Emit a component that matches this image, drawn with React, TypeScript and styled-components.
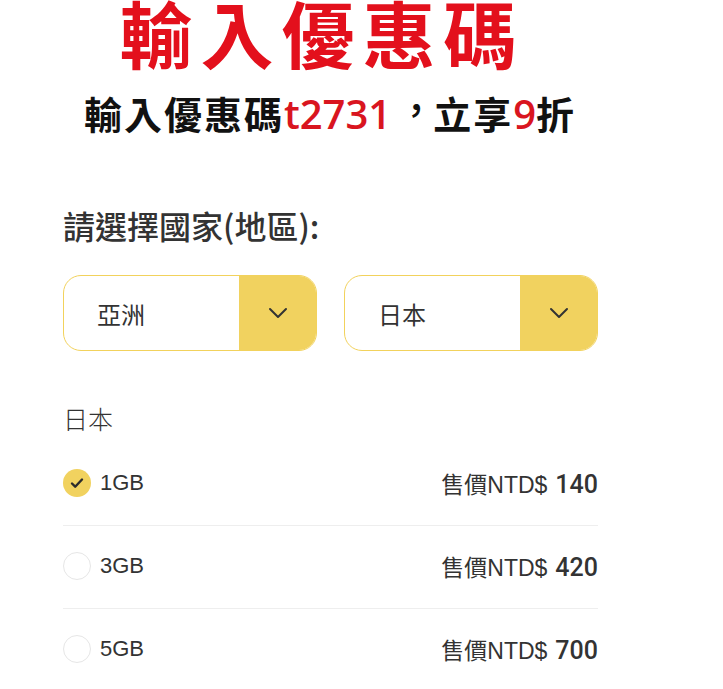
import styled, { createGlobalStyle } from 'styled-components';

const GlobalStyle = createGlobalStyle`
  body {
    margin: 0;
    background: #ffffff;
    font-family: "Noto Sans CJK TC", "Noto Sans", sans-serif;
    color: #333333;
  }
`;

const plans = [
  { size: '1GB', price: 140, checked: true },
  { size: '3GB', price: 420, checked: false },
  { size: '5GB', price: 700, checked: false },
];

const Chevron = () => (
  <svg width="20" height="12" viewBox="0 0 20 12" fill="none">
    <path d="M2 2l8 8 8-8" stroke="#333" strokeWidth="2" strokeLinecap="round" strokeLinejoin="round" />
  </svg>
);

const Check = () => (
  <svg width="14" height="12" viewBox="0 0 14 12" fill="none">
    <path d="M2 6.5l3.2 3.2L12 2.5" stroke="#2b2b2b" strokeWidth="2.4" strokeLinecap="round" strokeLinejoin="round" />
  </svg>
);

export default function App() {
  return (
    <>
      <GlobalStyle />
      <Page lang="zh-TW">
        <Banner>
          <Title>輸入優惠碼</Title>
          <Subtitle>
            輸入優惠碼<Red>t2731</Red>
            <Comma>，</Comma>立享<Red>9</Red>折
          </Subtitle>
        </Banner>
        <Content>
          <Label>請選擇國家(地區):</Label>
          <Selects>
            <Select>
              <SelectText>亞洲</SelectText>
              <SelectArrow>
                <Chevron />
              </SelectArrow>
            </Select>
            <Select>
              <SelectText>日本</SelectText>
              <SelectArrow>
                <Chevron />
              </SelectArrow>
            </Select>
          </Selects>
          <Region>日本</Region>
          <List>
            {plans.map((p) => (
              <Row key={p.size}>
                <Option>
                  <Radio $checked={p.checked}>{p.checked && <Check />}</Radio>
                  <Size>{p.size}</Size>
                </Option>
                <Price>
                  售價NTD$<Amount>{p.price}</Amount>
                </Price>
              </Row>
            ))}
          </List>
        </Content>
      </Page>
    </>
  );
}

const Page = styled.div`
  width: 723px;
  height: 689px;
  overflow: hidden;
`;

const Banner = styled.div`
  width: 660px;
  display: flex;
  flex-direction: column;
  align-items: center;
`;

const Title = styled.h1`
  margin: 0;
  padding-right: 16px;
  font-size: 73px;
  line-height: 62px;
  font-weight: 700;
  letter-spacing: 8px;
  color: #e3101c;
`;

const Subtitle = styled.div`
  margin-top: 25px;
  height: 52px;
  font-size: 38px;
  line-height: 52px;
  font-weight: 700;
  letter-spacing: 2px;
  color: #111111;
  white-space: nowrap;
`;

const Red = styled.span`
  font-family: "Open Sans", "Noto Sans", sans-serif;
  font-size: 40px;
  line-height: 0;
  color: #d9151f;
  font-weight: 600;
  letter-spacing: 0;
`;

const Comma = styled.span`
  display: inline-block;
  line-height: 0;
  font-weight: 500;
  vertical-align: 5px;
  margin: 0 -4px 0 6px;
`;

const Content = styled.div`
  width: 535px;
  margin-left: 63px;
  margin-top: 66px;
`;

const Label = styled.div`
  font-size: 32px;
  line-height: 40px;
  font-weight: 500;
  color: #333333;
`;

const Selects = styled.div`
  display: flex;
  gap: 27px;
  margin-top: 30px;
`;

const Select = styled.div`
  flex: 1;
  height: 76px;
  display: flex;
  border: 1.5px solid #f2d25c;
  border-radius: 18px;
  overflow: hidden;
  box-sizing: border-box;
`;

const SelectText = styled.div`
  flex: 1;
  display: flex;
  align-items: center;
  padding-left: 33px;
  font-size: 24px;
  color: #333333;
`;

const SelectArrow = styled.div`
  width: 77px;
  background: #f1d25f;
  display: flex;
  align-items: center;
  justify-content: center;
`;

const Region = styled.div`
  margin-top: 50px;
  font-size: 25px;
  line-height: 34px;
  font-weight: 300;
  color: #333333;
`;

const List = styled.div`
  margin-top: 8px;
`;

const Row = styled.div`
  height: 83px;
  display: flex;
  align-items: center;
  justify-content: space-between;
  border-bottom: 1px solid #eeeeee;
  box-sizing: border-box;
  padding-bottom: 2px;
`;

const Option = styled.div`
  display: flex;
  align-items: center;
  gap: 9px;
`;

const Radio = styled.div<{ $checked: boolean }>`
  width: 28px;
  height: 28px;
  border-radius: 50%;
  box-sizing: border-box;
  display: flex;
  align-items: center;
  justify-content: center;
  background: ${(p) => (p.$checked ? '#f1d25f' : '#ffffff')};
  border: ${(p) => (p.$checked ? 'none' : '1.5px solid #e6e6e6')};
`;

const Size = styled.span`
  font-family: "Liberation Sans", Arial, sans-serif;
  font-size: 22px;
  color: #333333;
`;

const Price = styled.div`
  font-family: "Liberation Sans", "Noto Sans CJK TC", sans-serif;
  font-size: 23px;
  color: #333333;
  display: flex;
  align-items: baseline;
`;

const Amount = styled.span`
  margin-left: 8px;
  font-family: Roboto, "Liberation Sans", sans-serif;
  font-size: 25px;
  font-weight: 500;
  color: #333333;
`;
